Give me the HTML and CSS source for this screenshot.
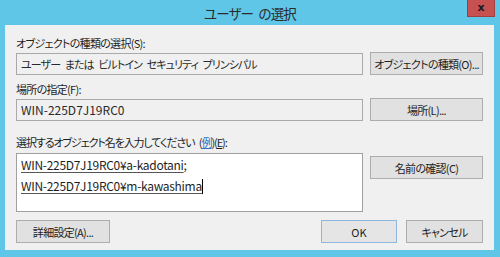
FILE: index.html
```html
<!DOCTYPE html>
<html lang="ja">
<head>
  <meta charset="UTF-8">
  <title>ユーザー の選択</title>
  <link rel="stylesheet" href="styles.css">
</head>
<body>
  <div class="window">
    <div class="titlebar">
      <span class="title">ユーザー の選択</span>
      <button class="close">x</button>
    </div>
    <div class="panel">
      <div class="row">
        <div class="field">
          <div class="label">オブジェクトの種類の選択(S):</div>
          <div class="box jp">ユーザー または ビルトイン セキュリティ プリンシパル</div>
        </div>
        <button class="btn">オブジェクトの種類(O)...</button>
      </div>
      <div class="row">
        <div class="field">
          <div class="label">場所の指定(F):</div>
          <div class="box">WIN-225D7J19RC0</div>
        </div>
        <button class="btn">場所(L)...</button>
      </div>
      <div class="row names">
        <div class="field">
          <div class="label">選択するオブジェクト名を入力してください (<span class="link">例</span>)(<u>E</u>):</div>
          <div class="box area">
            <div><u>WIN-225D7J19RC0¥a-kadotani</u>;</div>
            <div><u>WIN-225D7J19RC0¥m-kawashima</u><span class="caret"></span></div>
          </div>
        </div>
        <button class="btn">名前の確認(C)</button>
      </div>
      <div class="footer">
        <button class="btn small">詳細設定(A)...</button>
        <div class="actions">
          <button class="btn ok">OK</button>
          <button class="btn cancel">キャンセル</button>
        </div>
      </div>
    </div>
  </div>
</body>
</html>
```

FILE: styles.css
```css
body {
  margin: 0;
  background: #5fc6e8;
  font-family: "Noto Sans CJK JP", "Noto Sans", sans-serif;
  font-feature-settings: "palt";
  font-size: 12px;
  color: #1e1e1e;
}
.window {
  width: 500px;
  height: 257px;
}
.titlebar {
  position: relative;
  height: 25px;
}
.title {
  display: block;
  text-align: center;
  font-size: 13.5px;
  line-height: 26px;
  letter-spacing: -0.8px;
  word-spacing: 3px;
  color: #2b2b2b;
}
.close {
  position: absolute;
  top: 0;
  right: 5px;
  width: 28px;
  height: 17px;
  border: 1px solid #a04040;
  border-top: none;
  background: #c75050;
  color: #1a1a1a;
  font-family: "DejaVu Sans", sans-serif;
  font-weight: bold;
  font-size: 11px;
  line-height: 14px;
  padding: 0;
}
.panel {
  margin: 0 6px 0 5px;
  height: 225px;
  box-sizing: border-box;
  background: #f0f0f0;
  padding: 10px 11px 7px 11px;
  display: flex;
  flex-direction: column;
}
.row {
  display: flex;
  align-items: flex-end;
  gap: 7px;
  margin-bottom: 6px;
}
.field {
  width: 347px;
}
.label,
.jp,
.btn {
  font-size: 11px;
  letter-spacing: -0.7px;
}
.label {
  line-height: 16px;
  margin-bottom: 2px;
  white-space: nowrap;
}
.link {
  color: #2a6fc9;
  text-decoration: underline;
}
.box {
  height: 22px;
  box-sizing: border-box;
  border: 1px solid #a9a9a9;
  background: #f0f0f0;
  padding: 0 4px;
  line-height: 20px;
  white-space: nowrap;
  color: #2a2a2a;
}
.jp {
  letter-spacing: -0.9px;
  word-spacing: 3px;
}
.btn {
  width: 113px;
  height: 23px;
  box-sizing: border-box;
  border: 1px solid #adadad;
  background: #e1e1e1;
  font-family: inherit;
  font-feature-settings: "palt";
  color: #1e1e1e;
  padding: 0;
  white-space: nowrap;
}
.names {
  align-items: flex-start;
  margin-top: 7px;
  margin-bottom: 0;
}
.names .label {
  margin-bottom: 3px;
  letter-spacing: -1.1px;
  word-spacing: 3px;
}
.names .btn {
  margin-top: 22px;
}
.area {
  height: 59px;
  background: #fff;
  border-color: #a0a0a0;
  padding-top: 0;
  line-height: 21px;
  letter-spacing: -0.3px;
  color: #1e1e1e;
}
.area u {
  text-underline-offset: 2px;
  text-decoration-color: #555;
}
.caret {
  display: inline-block;
  width: 1px;
  height: 15px;
  background: #000;
  vertical-align: -3px;
}
.footer {
  margin-top: auto;
  display: flex;
  justify-content: space-between;
}
.small {
  width: 94px;
}
.actions {
  display: flex;
  gap: 9px;
}
.ok {
  width: 76px;
  border-color: #8fb6dd;
  background: #e5e5e5;
  letter-spacing: 0;
}
.cancel {
  width: 77px;
}
```
